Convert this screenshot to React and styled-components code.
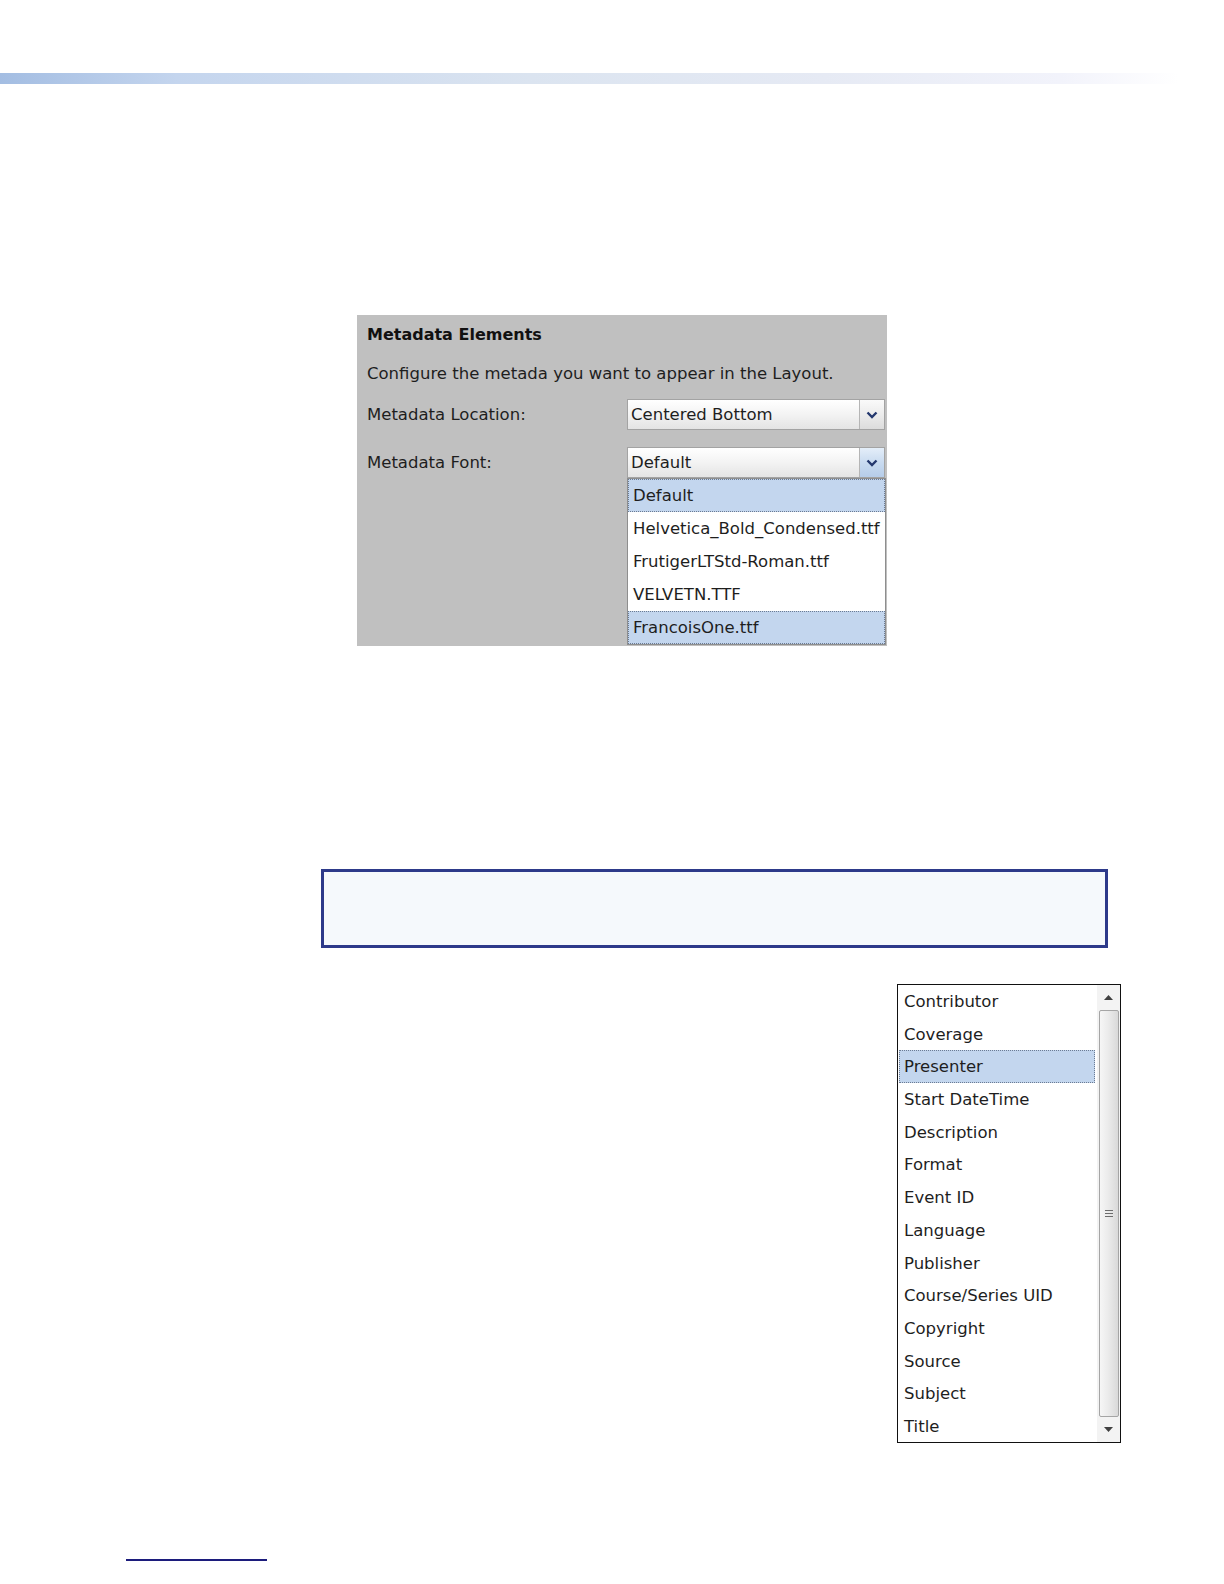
import React from 'react';
import styled, { createGlobalStyle } from 'styled-components';

const GlobalStyle = createGlobalStyle`
  html, body {
    margin: 0;
    padding: 0;
    background: #ffffff;
    overflow: hidden;
  }
  body {
    font-family: "DejaVu Sans", Verdana, sans-serif;
  }
`;

const Page = styled.div`
  width: 1224px;
  height: 1584px;
  display: flex;
  flex-direction: column;
  overflow: hidden;
`;

const TopBar = styled.div`
  margin-top: 73px;
  width: 1178px;
  height: 11px;
  background: linear-gradient(to right, #a3bde2 0%, #c4d5ee 15%, #dbe4f0 45%, #e6eaf4 70%, #f2f3fb 90%, #ffffff 100%);
`;

const Panel = styled.div`
  margin-top: 231px;
  margin-left: 357px;
  width: 530px;
  height: 331px;
  box-sizing: border-box;
  padding: 10px 0 0 10px;
  background: #c0c0c0;
  color: #1e1e1e;
  font-size: 16.5px;
  display: flex;
  flex-direction: column;
`;

const Title = styled.div`
  font-weight: bold;
  font-size: 16px;
  height: 20px;
  line-height: 20px;
  color: #111;
`;

const Intro = styled.div`
  margin-top: 19px;
  height: 20px;
  line-height: 20px;
`;

const Row = styled.div`
  margin-top: ${p => p.$gap}px;
  display: flex;
  align-items: center;
  height: 31px;
  position: relative;
`;

const Label = styled.div`
  width: 260px;
`;

const Select = styled.div`
  position: relative;
  width: 258px;
  height: 31px;
  box-sizing: border-box;
  border: 1px solid #a3a3a3;
  background: linear-gradient(to bottom, #ffffff 0%, #f3f3f3 50%, #e4e4e4 100%);
  display: flex;
`;

const SelectText = styled.div`
  flex: 1;
  padding-left: 3px;
  line-height: 29px;
  color: #1e1e1e;
`;

const SelectButton = styled.div`
  width: 24px;
  border-left: 1px solid #b5b5b5;
  display: flex;
  align-items: center;
  justify-content: center;
  background: ${p => p.$open
    ? 'linear-gradient(to bottom, #e4eef9 0%, #c9dbf0 50%, #b6cde9 100%)'
    : 'linear-gradient(to bottom, #fafafa 0%, #ececec 50%, #dcdcdc 100%)'};
`;

const Menu = styled.div`
  position: absolute;
  top: 30px;
  left: -1px;
  width: 259px;
  height: 167px;
  box-sizing: border-box;
  border: 1px solid #8e8e8e;
  background: #ffffff;
  display: flex;
  flex-direction: column;
  z-index: 2;
`;

const MenuItem = styled.div`
  height: 33px;
  box-sizing: border-box;
  line-height: 31px;
  padding-left: 4px;
  color: #1e1e1e;
  white-space: nowrap;
  border: 1px dotted ${p => (p.$active ? '#6b7b93' : 'transparent')};
  background: ${p => (p.$active ? '#c3d6ee' : 'transparent')};
`;

const Note = styled.div`
  margin-top: 223px;
  margin-left: 321px;
  width: 787px;
  height: 79px;
  box-sizing: border-box;
  border: 3px solid #2d3a8a;
  background: #f5f9fc;
`;

const ListBox = styled.div`
  margin-top: 36px;
  margin-left: 897px;
  width: 224px;
  height: 459px;
  box-sizing: border-box;
  border: 1px solid #111;
  background: #ffffff;
  display: flex;
  font-size: 16.5px;
  color: #1e1e1e;
`;

const Items = styled.div`
  flex: 1;
  padding: 0 2px 0 1px;
  display: flex;
  flex-direction: column;
`;

const Item = styled.div`
  height: 32.7px;
  box-sizing: border-box;
  line-height: 31px;
  padding-left: 4px;
  white-space: nowrap;
  border: 1px dotted ${p => (p.$active ? '#6b7b93' : 'transparent')};
  background: ${p => (p.$active ? '#c3d6ee' : 'transparent')};
`;

const ScrollBar = styled.div`
  width: 23px;
  display: flex;
  flex-direction: column;
  align-items: center;
  background: #f3f3f3;
`;

const Arrow = styled.div`
  height: 25px;
  width: 100%;
  display: flex;
  align-items: center;
  justify-content: center;
`;

const Thumb = styled.div`
  flex: 1;
  width: 20px;
  box-sizing: border-box;
  border: 1px solid #a5a5a5;
  border-radius: 2px;
  background: linear-gradient(to right, #f6f6f6 0%, #ebebeb 45%, #d9d9d9 100%);
  display: flex;
  align-items: center;
  justify-content: center;
`;

const Grip = styled.div`
  width: 8px;
  height: 7px;
  background: repeating-linear-gradient(to bottom, #6d6d6d 0px, #6d6d6d 1px, transparent 1px, transparent 3px);
`;

const FooterLine = styled.div`
  margin-top: 116px;
  margin-left: 126px;
  width: 141px;
  height: 2px;
  background: #1c1c7c;
`;

const Chevron = () => (
  <svg width="12" height="8" viewBox="0 0 12 8">
    <path d="M1.5 1.5 L6 6 L10.5 1.5" fill="none" stroke="#24386e" strokeWidth="2.4" />
  </svg>
);

const Triangle = ({ down }) => (
  <svg width="9" height="6" viewBox="0 0 9 6">
    <path d={down ? 'M0 0 L9 0 L4.5 5 Z' : 'M0 5 L9 5 L4.5 0 Z'} fill="#404040" />
  </svg>
);

const fonts = [
  'Default',
  'Helvetica_Bold_Condensed.ttf',
  'FrutigerLTStd-Roman.ttf',
  'VELVETN.TTF',
  'FrancoisOne.ttf',
];

const fields = [
  'Contributor',
  'Coverage',
  'Presenter',
  'Start DateTime',
  'Description',
  'Format',
  'Event ID',
  'Language',
  'Publisher',
  'Course/Series UID',
  'Copyright',
  'Source',
  'Subject',
  'Title',
];

function App() {
  return (
    <Page>
      <GlobalStyle />
      <TopBar />
      <Panel>
        <Title>Metadata Elements</Title>
        <Intro>Configure the metada you want to appear in the Layout.</Intro>
        <Row $gap={15}>
          <Label>Metadata Location:</Label>
          <Select>
            <SelectText>Centered Bottom</SelectText>
            <SelectButton><Chevron /></SelectButton>
          </Select>
        </Row>
        <Row $gap={17}>
          <Label>Metadata Font:</Label>
          <Select>
            <SelectText>Default</SelectText>
            <SelectButton $open><Chevron /></SelectButton>
            <Menu>
              {fonts.map((f, i) => (
                <MenuItem key={f} $active={i === 0 || i === fonts.length - 1}>{f}</MenuItem>
              ))}
            </Menu>
          </Select>
        </Row>
      </Panel>
      <Note />
      <ListBox>
        <Items>
          {fields.map(f => (
            <Item key={f} $active={f === 'Presenter'}>{f}</Item>
          ))}
        </Items>
        <ScrollBar>
          <Arrow><Triangle /></Arrow>
          <Thumb><Grip /></Thumb>
          <Arrow><Triangle down /></Arrow>
        </ScrollBar>
      </ListBox>
      <FooterLine />
    </Page>
  );
}

export default App;
